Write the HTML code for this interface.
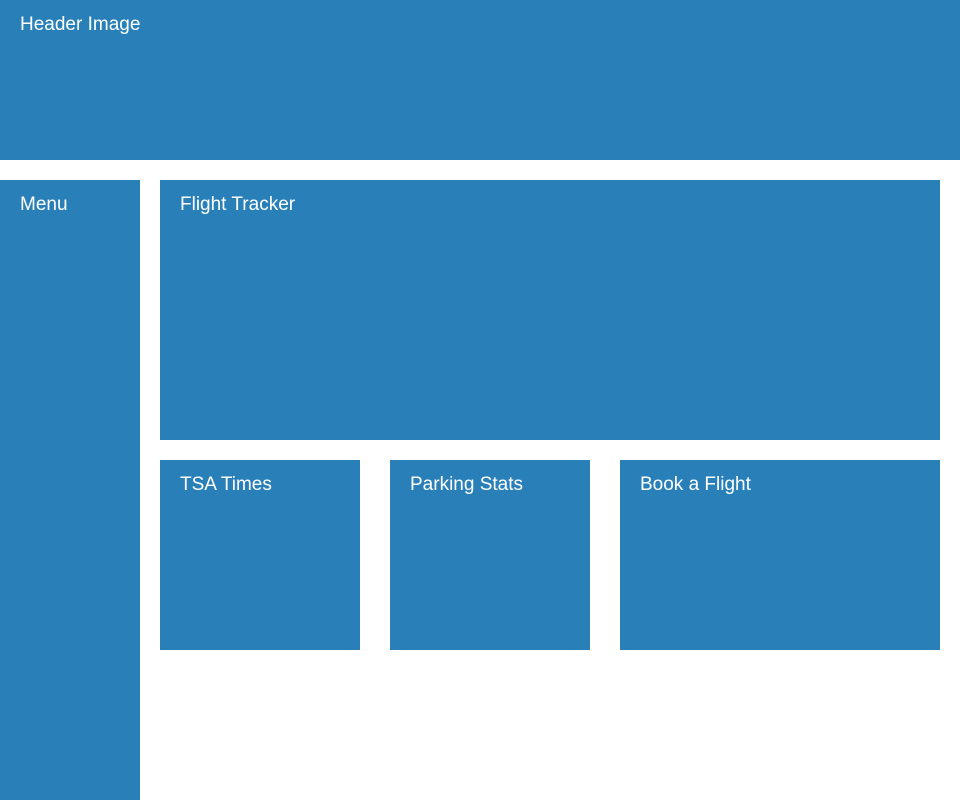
<!DOCTYPE html>
<html><head><style>
body{margin:0;width:960px;height:800px;background:#fff;position:relative;overflow:hidden;font-family:"Liberation Sans",sans-serif;}
div{position:absolute;background:#2980b9;color:#fff;font-size:19px;box-sizing:border-box;padding:13px 0 0 20px;line-height:24px;}
</style></head><body>
<div style="left:0;top:0;width:960px;height:160px">Header Image</div>
<div style="left:0;top:180px;width:140px;height:620px">Menu</div>
<div style="left:160px;top:180px;width:780px;height:260px">Flight Tracker</div>
<div style="left:160px;top:460px;width:200px;height:190px">TSA Times</div>
<div style="left:390px;top:460px;width:200px;height:190px">Parking Stats</div>
<div style="left:620px;top:460px;width:320px;height:190px">Book a Flight</div>
</body></html>
